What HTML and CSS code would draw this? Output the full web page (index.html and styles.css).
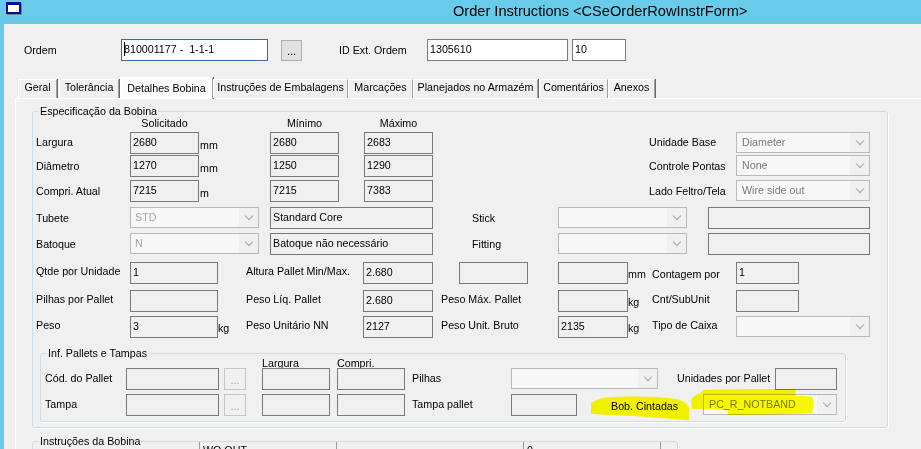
FILE: index.html
```html
<!DOCTYPE html>
<html lang="pt">
<head>
<meta charset="utf-8">
<title>Order Instructions</title>
<link rel="stylesheet" href="styles.css">
</head>
<body>
<div class="window">
  <div class="titlebar">
    <svg class="app-icon" width="18" height="15" viewBox="0 0 18 15">
      <rect x="2" y="2" width="15" height="12" fill="#6f8794"/>
      <rect x="1" y="1" width="15" height="12" fill="#0a0a8c"/>
      <rect x="3" y="4" width="11" height="7" fill="#ffffff"/>
    </svg>
    <span class="title">Order Instructions &lt;CSeOrderRowInstrForm&gt;</span>
  </div>
  <div class="client">
    <div class="order-row">
      <span class="order-label">Ordem</span>
      <div class="tb focused"><span class="caret"></span>810001177 -&nbsp; 1-1-1</div>
      <div class="btn-more">...</div>
      <span class="order-label ext">ID Ext. Ordem</span>
      <div class="tb ext-id">1305610</div>
      <div class="tb ext-seq">10</div>
    </div>

    <div class="tabs">
      <div class="tab t-geral">Geral</div>
      <div class="tab t-tol">Tolerância</div>
      <div class="tab t-det active">Detalhes Bobina</div>
      <div class="tab t-emb">Instruções de Embalagens</div>
      <div class="tab t-mar">Marcações</div>
      <div class="tab t-pla">Planejados no Armazém</div>
      <div class="tab t-com">Comentários</div>
      <div class="tab t-ane">Anexos</div>
    </div>

    <div class="panel">
      <fieldset class="group spec">
        <legend>Especificação da Bobina</legend>

        <div class="g1">
          <div class="hdr c-req r-hdr">Solicitado</div>
          <div class="hdr c-min r-hdr">Mínimo</div>
          <div class="hdr c-max r-hdr">Máximo</div>

          <div class="lbl c-lbl r-larg">Largura</div>
          <div class="ro c-req r-larg">2680</div>
          <div class="unit c-unit r-larg">mm</div>
          <div class="ro c-min r-larg">2680</div>
          <div class="ro c-max r-larg">2683</div>
          <div class="lbl c-rlbl r-larg">Unidade Base</div>
          <div class="sel c-rsel r-larg"><span>Diameter</span></div>

          <div class="lbl c-lbl r-diam">Diâmetro</div>
          <div class="ro c-req r-diam">1270</div>
          <div class="unit c-unit r-diam">mm</div>
          <div class="ro c-min r-diam">1250</div>
          <div class="ro c-max r-diam">1290</div>
          <div class="lbl c-rlbl r-diam">Controle Pontas</div>
          <div class="sel c-rsel r-diam"><span>None</span></div>

          <div class="lbl c-lbl r-comp">Compri. Atual</div>
          <div class="ro c-req r-comp">7215</div>
          <div class="unit c-unit r-comp">m</div>
          <div class="ro c-min r-comp">7215</div>
          <div class="ro c-max r-comp">7383</div>
          <div class="lbl c-rlbl r-comp">Lado Feltro/Tela</div>
          <div class="sel c-rsel r-comp"><span>Wire side out</span></div>

          <div class="lbl c-lbl r-tub">Tubete</div>
          <div class="sel c-combo r-tub"><span class="muted">STD</span></div>
          <div class="ro c-desc r-tub">Standard Core</div>
          <div class="lbl c-xlbl r-tub">Stick</div>
          <div class="sel c-xsel r-tub"><span></span></div>
          <div class="ro c-xbox r-tub"></div>

          <div class="lbl c-lbl r-bat">Batoque</div>
          <div class="sel c-combo r-bat"><span class="muted">N</span></div>
          <div class="ro c-desc r-bat">Batoque não necessário</div>
          <div class="lbl c-xlbl r-bat">Fitting</div>
          <div class="sel c-xsel r-bat"><span></span></div>
          <div class="ro c-xbox r-bat"></div>
        </div>

        <div class="g2">
          <div class="lbl c-l1 ra">Qtde por Unidade</div>
          <div class="ro c-v1 ra">1</div>
          <div class="lbl c-l2 ra">Altura Pallet Min/Max.</div>
          <div class="ro c-v2 ra">2.680</div>
          <div class="ro c-v3 ra"></div>
          <div class="ro c-v4 ra"></div>
          <div class="unit c-u4 ra">mm</div>
          <div class="lbl c-l5 ra low">Contagem por</div>
          <div class="ro c-v5 ra">1</div>

          <div class="lbl c-l1 rb">Pilhas por Pallet</div>
          <div class="ro c-v1 rb"></div>
          <div class="lbl c-l2 rb">Peso Líq. Pallet</div>
          <div class="ro c-v2 rb">2.680</div>
          <div class="lbl c-l3 rb">Peso Máx. Pallet</div>
          <div class="ro c-v4 rb"></div>
          <div class="unit c-u4 rb">kg</div>
          <div class="lbl c-l5 rb">Cnt/SubUnit</div>
          <div class="ro c-v5 rb"></div>

          <div class="lbl c-l1 rc">Peso</div>
          <div class="ro c-v1 rc">3</div>
          <div class="unit c-u1 rc">kg</div>
          <div class="lbl c-l2 rc">Peso Unitário NN</div>
          <div class="ro c-v2 rc">2127</div>
          <div class="lbl c-l3 rc">Peso Unit. Bruto</div>
          <div class="ro c-v4 rc">2135</div>
          <div class="unit c-u4 rc">kg</div>
          <div class="lbl c-l5 rc">Tipo de Caixa</div>
          <div class="sel c-v5w rc"><span></span></div>
        </div>

        <fieldset class="group pallets">
          <legend>Inf. Pallets e Tampas</legend>
          <div class="g3">
            <div class="hdr-l c-w pr0">Largura</div>
            <div class="hdr-l c-c pr0">Compri.</div>

            <div class="lbl c-pl1 pr1">Cód. do Pallet</div>
            <div class="ro c-pv1 pr1"></div>
            <div class="btn-dis c-pbtn pr1">...</div>
            <div class="ro c-w pr1"></div>
            <div class="ro c-c pr1"></div>
            <div class="lbl c-pl2 pr1">Pilhas</div>
            <div class="sel c-psel pr1"><span></span></div>
            <div class="lbl c-pl4 pr1">Unidades por Pallet</div>
            <div class="ro c-pbox2 pr1"></div>

            <div class="lbl c-pl1 pr2">Tampa</div>
            <div class="ro c-pv1 pr2"></div>
            <div class="btn-dis c-pbtn pr2">...</div>
            <div class="ro c-w pr2"></div>
            <div class="ro c-c pr2"></div>
            <div class="lbl c-pl2 pr2">Tampa pallet</div>
            <div class="ro c-pbox pr2"></div>
            <div class="lbl c-pl3 pr2 low">Bob. Cintadas</div>
            <div class="sel c-psel2 pr2"><span>PC_R_NOTBAND</span></div>
          </div>
        </fieldset>
      </fieldset>

      <fieldset class="group instr">
        <legend>Instruções da Bobina</legend>
        <div class="instr-head">
          <div class="ih-cell"></div>
          <div class="ih-cell">WO OUT</div>
          <div class="ih-cell"></div>
          <div class="ih-cell">0</div>
          <div class="ih-cell"></div>
        </div>
      </fieldset>
    </div>
  </div>

  <svg class="marker" width="921" height="449" viewBox="0 0 921 449">
    <path d="M591 403 C597 399 604 397 612 397 C630 396 658 396 676 399 C684 401 688 404 689 408 L689 420 C670 419 640 416 612 415 C602 415 595 414 591 414 Z" fill="#ffff00"/>
    <path d="M691 400 C692 397 697 394 701 393 L703 390 C730 389 770 389 795 389 L796 396 C803 396 809 396 812 397 C814 401 814 406 813 409 L811 413 C795 414 770 415 728 415 L728 410 C715 410 700 409 692 409 Z" fill="#ffff00"/>
  </svg>
</div>
</body>
</html>
```

FILE: styles.css
```css
* {
  box-sizing: border-box;
}

html,
body {
  margin: 0;
  padding: 0;
}

body {
  width: 921px;
  height: 449px;
  overflow: hidden;
  background: #67cbe9;
  font-family: "Liberation Sans", Arial, sans-serif;
  font-size: 10.7px;
  color: #000;
}

.window {
  position: relative;
  width: 921px;
  height: 449px;
  overflow: hidden;
  background: #67cbe9;
}

/* ---------- title bar ---------- */
.titlebar {
  height: 23px;
  display: flex;
  align-items: flex-start;
}

.app-icon {
  flex: none;
  margin: 1px 0 0 5px;
}

.title {
  margin-left: 430px;
  font-size: 14.6px;
  line-height: 22px;
  white-space: nowrap;
}

/* ---------- client area ---------- */
.client {
  margin-left: 4px;
  height: 426px;
  background: #f0f0f0;
  border-top: 1px solid #9db4c1;
  overflow: hidden;
}

.order-row {
  display: flex;
  align-items: flex-end;
  height: 22px;
  margin-top: 15px;
  padding-left: 20px;
}

.order-label {
  width: 97px;
  flex: none;
  align-self: center;
  line-height: 16px;
  white-space: nowrap;
}

.order-label.ext {
  width: 88px;
  margin-left: 37px;
}

.tb {
  flex: none;
  height: 22px;
  border: 1px solid #7a7a7a;
  background: #fff;
  padding: 0 2px;
  line-height: 19px;
  white-space: nowrap;
}

.tb.focused {
  width: 147px;
  border-color: #3d6a99;
}

.tb.ext-id {
  width: 141px;
}

.tb.ext-seq {
  width: 54px;
  margin-left: 4px;
}

.caret {
  display: inline-block;
  width: 1px;
  height: 14px;
  margin-right: -1px;
  background: #000;
  vertical-align: -3px;
}

.btn-more {
  flex: none;
  width: 21px;
  height: 21px;
  margin-left: 13px;
  background: #e1e1e1;
  border: 1px solid #adadad;
  display: flex;
  justify-content: center;
  align-items: flex-end;
  font-size: 11px;
  line-height: 11px;
  padding-bottom: 3px;
}

/* ---------- tabs ---------- */
.tabs {
  position: relative;
  z-index: 1;
  display: flex;
  align-items: flex-end;
  height: 21px;
  margin-top: 16px;
  padding-left: 14px;
}

.tab {
  flex: none;
  height: 19px;
  background: #f0f0f0;
  border-top: 1px solid #fff;
  border-left: 1px solid #fff;
  border-right: 1px solid #a0a0a0;
  box-shadow: 1px 0 0 #696969;
  text-align: center;
  line-height: 15px;
  white-space: nowrap;
}

.tab.active {
  height: 22px;
  margin-bottom: -1px;
  background: #fcfcfc;
  line-height: 21px;
}

.t-geral { width: 39px; margin-right: 2px; }
.t-tol { width: 60px; margin-right: 1px; }
.t-det { width: 93px; }
.t-emb { width: 135px; }
.t-mar { width: 65px; }
.t-pla { width: 125px; margin-right: 1px; }
.t-com { width: 69px; }
.t-ane { width: 47px; }

/* ---------- tab page ---------- */
.panel {
  margin-left: 11px;
  width: 910px;
  height: 351px;
  border-top: 1px solid #fff;
  border-left: 1px solid #fff;
  background: #f0f0f0;
  padding: 5px 0 0 16px;
}

.group {
  margin: 0;
  padding: 0;
  min-width: 0;
  border: 1px solid #d3dbe2;
  border-radius: 3px;
  box-shadow: 1px 1px 0 #fff;
}

.group > legend {
  margin-left: 6px;
  padding: 0 1px;
  line-height: 14px;
  font-size: 10.7px;
}

.spec {
  width: 856px;
  height: 324px;
}

.pallets {
  width: 806px;
  height: 76px;
  margin: 8px 0 0 7px;
}

.instr {
  width: 646px;
  height: 60px;
  margin-top: 6px;
}

/* ---------- shared controls ---------- */
.lbl {
  white-space: nowrap;
  line-height: 22px;
}

.hdr {
  text-align: center;
  line-height: 14px;
  white-space: nowrap;
}

.hdr-l {
  line-height: 12px;
  white-space: nowrap;
}

.unit {
  line-height: 26px;
  white-space: nowrap;
}

.ro {
  height: 22px;
  border: 1px solid #7a7a7a;
  background: #f0f0f0;
  padding: 0 2px;
  line-height: 18px;
  white-space: nowrap;
  overflow: hidden;
}

.sel {
  height: 21px;
  border: 1px solid #b9b9b9;
  background: #f0f0f0;
  display: flex;
  align-items: stretch;
}

.sel > span {
  flex: 1;
  min-width: 0;
  background: #f7f7f7;
  color: #7a7a7a;
  padding-left: 5px;
  line-height: 19px;
  white-space: nowrap;
  overflow: hidden;
}

.sel > span.muted {
  color: #a6a6a6;
  padding-left: 4px;
}

.sel::after {
  content: "";
  flex: none;
  align-self: flex-start;
  width: 5px;
  height: 5px;
  margin: 5px 6px 0 7px;
  border-right: 1px solid #a6a6a6;
  border-bottom: 1px solid #a6a6a6;
  transform: rotate(45deg);
}

.btn-dis {
  height: 22px;
  border: 1px solid #c6c6c6;
  background: #f0f0f0;
  color: #a0a0a0;
  display: flex;
  justify-content: center;
  align-items: flex-end;
  font-size: 11px;
  line-height: 11px;
  padding-bottom: 3px;
}

/* ---------- grid 1 : dimensions ---------- */
.g1 {
  display: grid;
  margin-top: -2px;
  grid-template-columns: 97px 69px 60px 11px 69px 25px 69px 125px 91px 38px 21px 28px 134px;
  grid-template-rows: 14px 2px 22px 1px 22px 3px 22px 5px 22px 4px 22px;
  align-items: start;
}

.g1 .c-lbl { grid-column: 1 / 2; padding-left: 3px; }
.g1 .c-req { grid-column: 2 / 3; }
.g1 .c-unit { grid-column: 3 / 4; padding-left: 1px; }
.g1 .c-min { grid-column: 5 / 6; }
.g1 .c-max { grid-column: 7 / 8; }
.g1 .c-rlbl { grid-column: 10 / 13; }
.g1 .c-rsel { grid-column: 13 / 14; }
.g1 .c-combo { grid-column: 2 / 4; }
.g1 .c-desc { grid-column: 5 / 8; }
.g1 .c-xlbl { grid-column: 8 / 9; padding-left: 39px; }
.g1 .c-xsel { grid-column: 9 / 11; }
.g1 .c-xbox { grid-column: 12 / 14; }

.g1 .r-hdr { grid-row: 1; }
.g1 .r-larg { grid-row: 3; }
.g1 .r-diam { grid-row: 5; }
.g1 .r-comp { grid-row: 7; }
.g1 .r-tub { grid-row: 9; }
.g1 .r-bat { grid-row: 11; }

.g1 .r-larg.lbl { line-height: 20px; }

/* ---------- grid 2 : pallet / weights ---------- */
.g2 {
  display: grid;
  margin-top: 7px;
  grid-template-columns: 97px 88px 28px 117px 70px 26px 69px 30px 70px 24px 84px 63px 71px;
  grid-template-rows: 22px 6px 22px 4px 22px;
  align-items: start;
}

.g2 .lbl { line-height: 18px; }
.g2 .lbl.low { line-height: 24px; }
.g2 .unit { line-height: 25px; }

.g2 .c-l1 { grid-column: 1 / 2; padding-left: 3px; }
.g2 .c-v1 { grid-column: 2 / 3; }
.g2 .c-u1 { grid-column: 3 / 4; }
.g2 .c-l2 { grid-column: 4 / 5; }
.g2 .c-v2 { grid-column: 5 / 6; }
.g2 .c-l3 { grid-column: 6 / 9; padding-left: 8px; }
.g2 .c-v3 { grid-column: 7 / 8; }
.g2 .c-v4 { grid-column: 9 / 10; }
.g2 .c-u4 { grid-column: 10 / 11; }
.g2 .c-l5 { grid-column: 11 / 12; }
.g2 .c-v5 { grid-column: 12 / 13; }
.g2 .c-v5w { grid-column: 12 / 14; }

.g2 .ra { grid-row: 1; }
.g2 .rb { grid-row: 3; }
.g2 .rc { grid-row: 5; }

/* ---------- grid 3 : pallets & lids ---------- */
.g3 {
  display: grid;
  margin-top: -3px;
  grid-template-columns: 85px 93px 5px 22px 16px 68px 7px 68px 106px 66px 81px 45px 72px 62px;
  grid-template-rows: 11px 22px 4px 22px;
  align-items: start;
}

.g3 .lbl { line-height: 20px; }
.g3 .lbl.low { line-height: 24px; }

.g3 .c-pl1 { grid-column: 1 / 2; padding-left: 4px; }
.g3 .c-pv1 { grid-column: 2 / 3; }
.g3 .c-pbtn { grid-column: 4 / 5; }
.g3 .c-w { grid-column: 6 / 7; }
.g3 .c-c { grid-column: 8 / 9; }
.g3 .c-pl2 { grid-column: 9 / 10; padding-left: 7px; }
.g3 .c-psel { grid-column: 10 / 12; }
.g3 .c-pbox { grid-column: 10 / 11; }
.g3 .c-pl3 { grid-column: 11 / 13; padding-left: 34px; }
.g3 .c-pl4 { grid-column: 12 / 14; padding-left: 19px; }
.g3 .c-pbox2 { grid-column: 14 / 15; }
.g3 .c-psel2 { grid-column: 13 / 15; }

.g3 .pr0 { grid-row: 1; }
.g3 .pr1 { grid-row: 2; }
.g3 .pr2 { grid-row: 4; }

/* ---------- instructions grid header ---------- */
.instr-head {
  display: grid;
  margin-top: -6px;
  grid-template-columns: 166px 137px 187px 137px 1fr;
  height: 20px;
}

.ih-cell {
  padding: 1px 3px 0;
  line-height: 14px;
  white-space: nowrap;
}

.ih-cell + .ih-cell {
  border-left: 1px solid #9a9a9a;
}

/* ---------- highlighter marks ---------- */
.marker {
  position: absolute;
  left: 0;
  top: 0;
  pointer-events: none;
  mix-blend-mode: multiply;
}
```
